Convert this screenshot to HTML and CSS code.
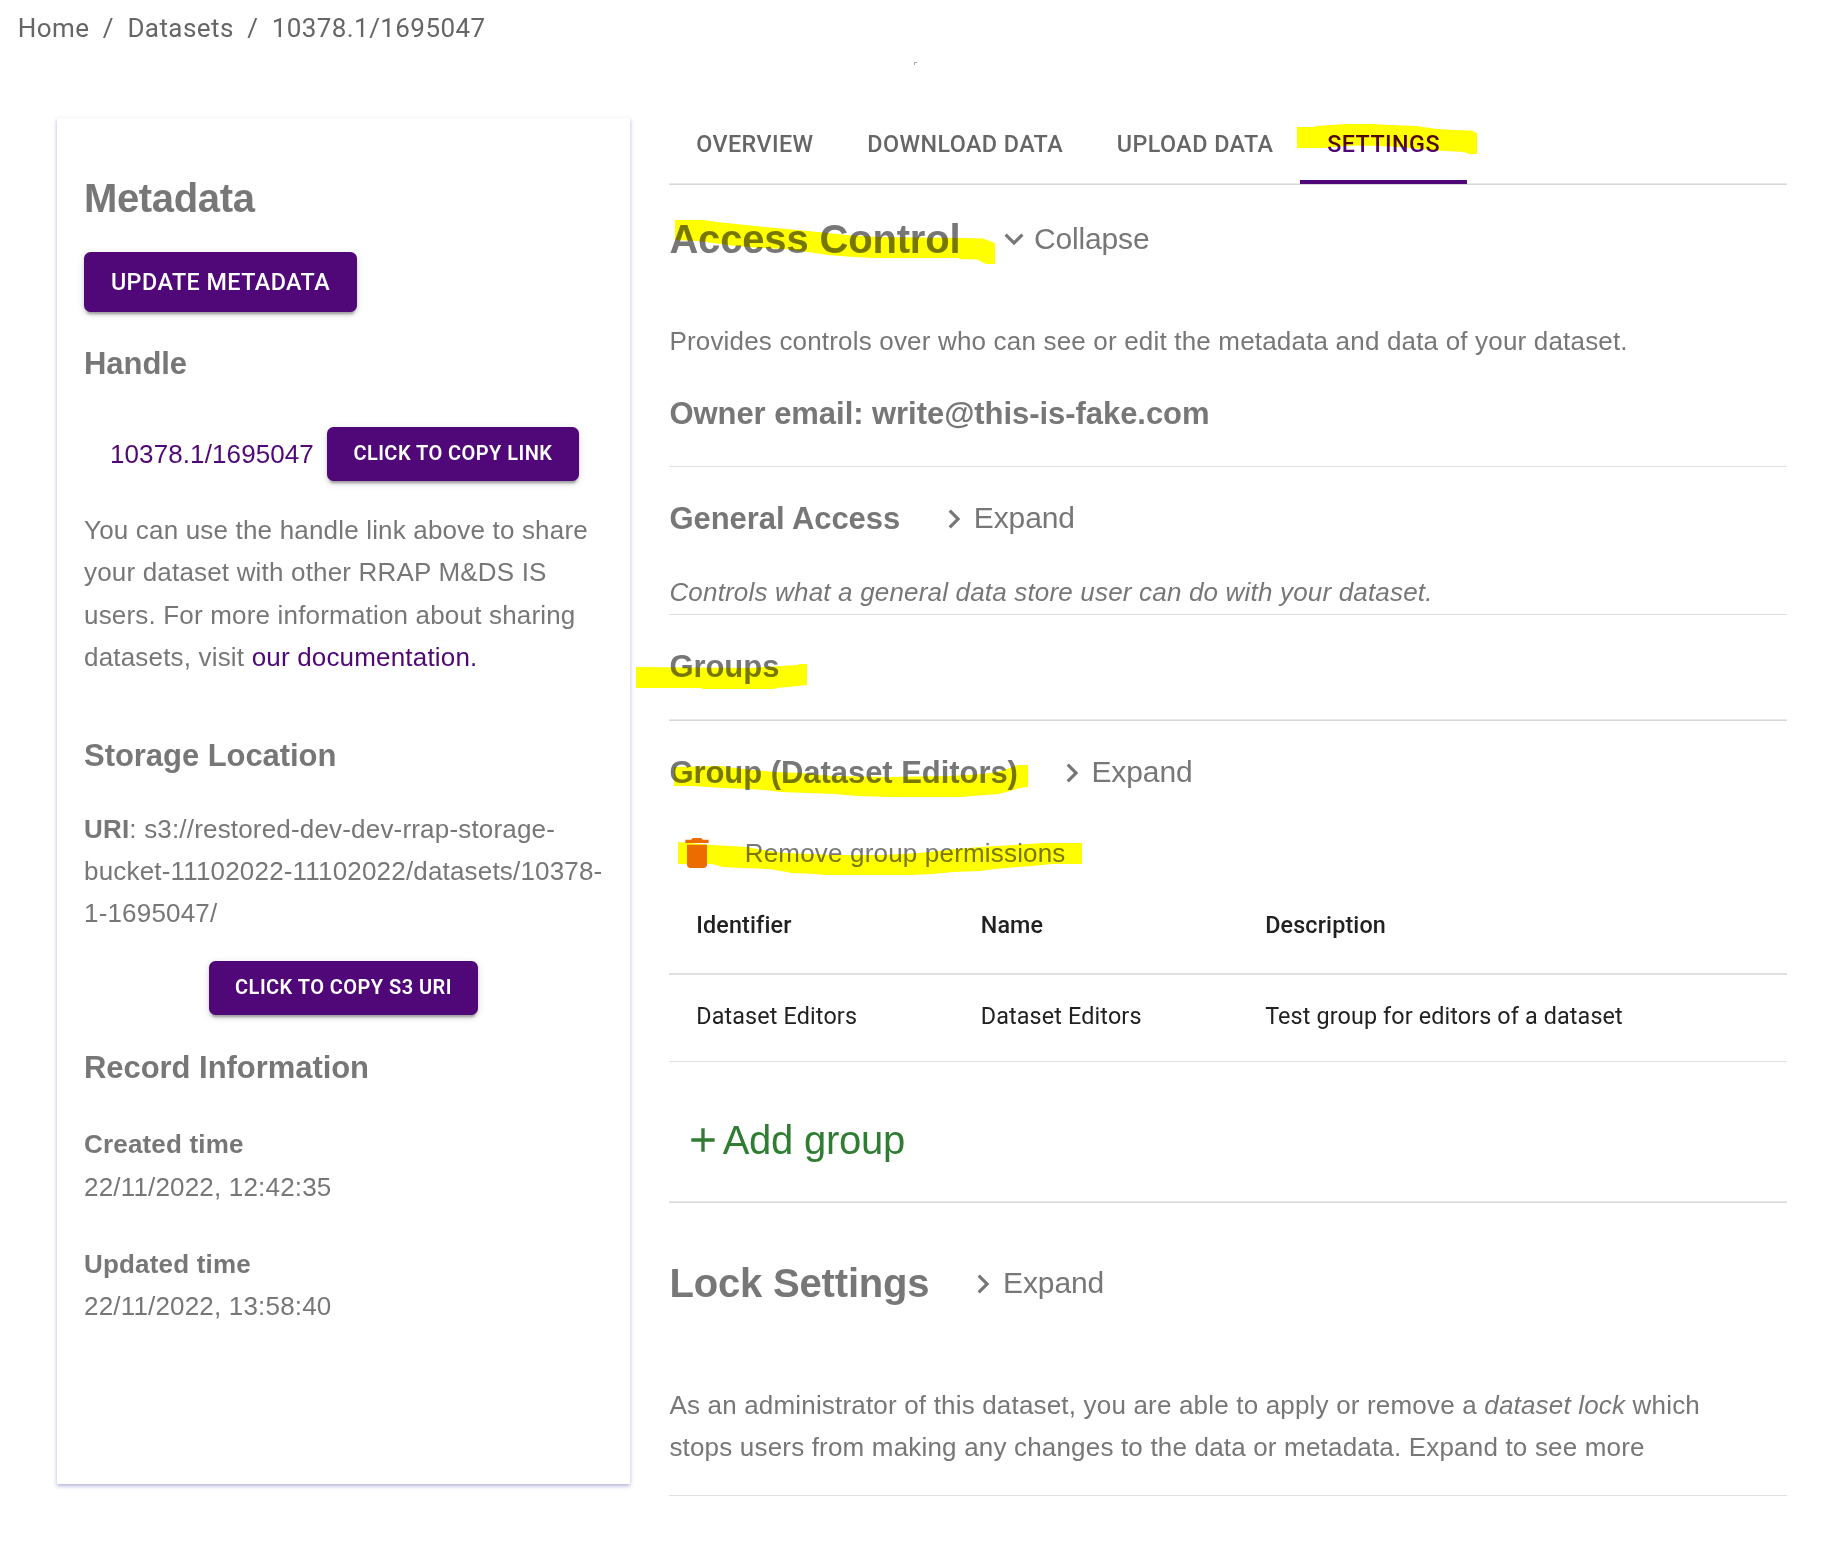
FILE: index.html
```html
<!DOCTYPE html>
<html lang="en">
<head>
<meta charset="utf-8">
<title>Dataset 10378.1/1695047</title>
<link rel="stylesheet" href="styles.css">
</head>
<body>
<nav class="crumbs"><a>Home</a><span>/</span><a>Datasets</a><span>/</span><a>10378.1/1695047</a></nav>
<div class="layout">
  <aside class="card">
    <h2 class="title card-title">Metadata</h2>
    <button class="btn btn-update">Update Metadata</button>
    <h3 class="subtitle handle-title">Handle</h3>
    <div class="handle-row">
      <a class="link handle-link">10378.1/1695047</a>
      <button class="btn btn-small btn-link">Click to copy link</button>
    </div>
    <p class="body">You can use the handle link above to share your dataset with other RRAP M&amp;DS IS users. For more information about sharing datasets, visit <a class="link">our documentation.</a></p>
    <h3 class="subtitle storage-title">Storage Location</h3>
    <p class="body uri"><b>URI</b>: s3://restored-dev-dev-rrap-storage-bucket-11102022-11102022/datasets/10378-1-1695047/</p>
    <button class="btn btn-small btn-uri">Click to copy S3 URI</button>
    <h3 class="subtitle record-title">Record Information</h3>
    <p class="body created"><b>Created time</b><br>22/11/2022, 12:42:35</p>
    <p class="body updated"><b>Updated time</b><br>22/11/2022, 13:58:40</p>
  </aside>

  <main class="content">
    <div class="tabs">
      <a class="tab">Overview</a>
      <a class="tab">Download data</a>
      <a class="tab">Upload data</a>
      <a class="tab active">Settings</a>
    </div>

    <div class="head access-head">
      <h2 class="title">Access Control</h2>
      <a class="toggle collapse"><svg class="chevron" viewBox="0 0 24 24"><path d="M16.59 8.59 12 13.17 7.41 8.59 6 10l6 6 6-6z"/></svg>Collapse</a>
    </div>
    <p class="body access-text">Provides controls over who can see or edit the metadata and data of your dataset.</p>
    <h3 class="subtitle owner">Owner email: write@this-is-fake.com</h3>
    <hr class="rule owner-rule">

    <div class="head sub-head">
      <h3 class="subtitle">General Access</h3>
      <a class="toggle"><svg class="chevron right" viewBox="0 0 24 24"><path d="M10 6 8.59 7.41 13.17 12l-4.58 4.59L10 18l6-6z"/></svg>Expand</a>
    </div>
    <p class="body italic general-text">Controls what a general data store user can do with your dataset.</p>
    <hr class="rule general-rule">

    <h3 class="subtitle groups">Groups</h3>
    <hr class="rule double groups-rule">

    <div class="head sub-head">
      <h3 class="subtitle">Group (Dataset Editors)</h3>
      <a class="toggle"><svg class="chevron right" viewBox="0 0 24 24"><path d="M10 6 8.59 7.41 13.17 12l-4.58 4.59L10 18l6-6z"/></svg>Expand</a>
    </div>
    <div class="body remove"><svg class="icon" viewBox="0 0 24 24"><path d="M6 19c0 1.1.9 2 2 2h8c1.1 0 2-.9 2-2V7H6v12zM19 4h-3.500l-1-1h-5l-1 1H5v2h14V4z"/></svg><span>Remove group permissions</span></div>

    <div class="table">
      <div class="row header"><span>Identifier</span><span>Name</span><span>Description</span></div>
      <div class="row"><span>Dataset Editors</span><span>Dataset Editors</span><span class="desc">Test group for editors of a dataset</span></div>
    </div>

    <a class="add"><svg class="icon" viewBox="0 0 24 24"><path d="M19 13h-6v6h-2v-6H5v-2h6V5h2v6h6v2z"/></svg>Add group</a>
    <hr class="rule double add-rule">

    <div class="head lock-head">
      <h2 class="title">Lock Settings</h2>
      <a class="toggle"><svg class="chevron right" viewBox="0 0 24 24"><path d="M10 6 8.59 7.41 13.17 12l-4.58 4.59L10 18l6-6z"/></svg>Expand</a>
    </div>
    <p class="body lock-text">As an administrator of this dataset, you are able to apply or remove a <i>dataset lock</i> which stops users from making any changes to the data or metadata. Expand to see more</p>
    <hr class="rule lock-rule">
  </main>
</div>

<!-- highlighter strokes drawn over the page -->
<svg class="marker" viewBox="0 0 1826 1547">
  <path d="M1297 127H1315V126L1331 125 1345 124H1373L1389 125 1416 126 1430 128 1438 129 1454 130 1471 130.500 1477 133V154H1469L1464 152 1446 151 1430 150 1416 148.500 1400 147 1380 146 1356 145.500 1340 146.500 1323 148H1297z"/>
  <path d="M675 220H703L717 222 755 226 787 229 818 232 847 235 877 237 961 238 983 238.500 995 243V264H986L977 259.500 959 259V258H874L854 257 828 255 808 252 785 249 762 248 736 246 713 243 697 241 675 240z"/>
  <path d="M636 667 750 668 781 666 798 665 799 664H807V685L788 687 776 688 775 689H702V688H636z"/>
  <path d="M674 767 721 766 735 768 752 770 775 772 802 773 819 775 834 776 888 777 949 776 984 774 997 772 1007 769 1018 765H1028V787L1020 788 1010 791 999 794 984 795 961 797H890L857 796 834 794 781 792 765 790 750 789 723 788 693 786 674 786z"/>
  <path d="M678 842 712 845 731 846 746 847 769 851 785 853 811 854 834 855 884 855 919 853 938 851 957 849 980 847 1014 845 1045 843H1082V864L1052 864 1033 866 1018 867 995 869 980 871 953 872 932 874 911 875H825L815 874 792 873 781 871 769 869 742 868 723 867 712 864H678z"/>
</svg>
<span class="speck"></span>
</body>
</html>
```
FILE: styles.css
```css
* { box-sizing: border-box; }

body {
  margin: 0;
  position: relative;
  background: #fff;
  color: #777;
  font-family: "Liberation Sans", Arial, sans-serif;
}

h2, h3, p { margin: 0; }

.crumbs {
  display: flex;
  gap: 13.400px;
  height: 50px;
  padding: 6px 17.800px 0;
  color: #666;
  font: 400 26px/44px Roboto, sans-serif;
  letter-spacing: 0.420px;
}

.layout {
  display: flex;
  align-items: flex-start;
  gap: 39.400px;
  padding: 54px 38px 0 57px;
}

.card {
  width: 573px;
  height: 1366px;
  margin-top: 14px;
  padding: 56px 22px 0 27px;
  box-shadow: 0 1.500px 4px rgba(60, 65, 165, 0.4);
}

.title { font-size: 40px; line-height: 48px; letter-spacing: -0.170px; }
.card-title { letter-spacing: -0.350px; }
.subtitle { font-size: 31px; line-height: 38px; margin-bottom: -2px; letter-spacing: -0.050px; }
.body { font-size: 26px; line-height: 42.330px; letter-spacing: 0.180px; }
.italic { font-style: italic; }
.link { color: #500778; }

.btn {
  display: block;
  padding: 0;
  border: 0;
  border-radius: 6.500px;
  background: #500778;
  color: #fff;
  font-family: Roboto, sans-serif;
  font-weight: 500;
  letter-spacing: 0.450px;
  text-transform: uppercase;
  box-shadow: 0 5px 2px -3px rgba(0, 0, 0, 0.2), 0 3px 3px rgba(0, 0, 0, 0.14), 0 2px 8px rgba(0, 0, 0, 0.12);
}
.btn-update { width: 273px; height: 60px; margin-top: 30px; font-size: 23.330px; }
.btn-small { height: 54px; padding-bottom: 2px; font-size: 20px; font-weight: 600; }
.btn-link { width: 252px; }
.btn-uri { width: 269px; margin: 26.200px 0 0 125px; }

.handle-title { margin-top: 33px; }
.handle-row {
  display: flex;
  align-items: center;
  gap: 13px;
  margin: 46px 0 28px;
  padding-left: 26px;
}
.handle-link { font-size: 26px; letter-spacing: 0.100px; }
.storage-title { margin-top: 59px; }
.uri { margin-top: 34.500px; }
.record-title { margin-top: 34px; }
.created { margin-top: 38.300px; }
.updated { margin-top: 35px; }

.content { width: 1118px; }

.tabs {
  display: flex;
  height: 81px;
  background: linear-gradient(#e9e9e9 50%, #dadada 50%) bottom / 100% 2px no-repeat;
  color: #666;
  font: 500 23.330px/40px Roboto, sans-serif;
  letter-spacing: 0.430px;
  text-transform: uppercase;
}
.tab { height: 80px; padding: 20px 26.850px 0; }
.tab.active { color: #500778; border-bottom: 4px solid #500778; }

.head { display: flex; align-items: center; gap: 35px; }
.toggle { display: flex; align-items: center; font-size: 30px; line-height: 36px; letter-spacing: -0.080px; }
.collapse { letter-spacing: -0.150px; }
.chevron { width: 38px; height: 38px; margin: -1px 0.500px -1px 0; fill: currentColor; }
.chevron.right { margin: 0 0.500px -2px 0; }
.icon { width: 40px; height: 40px; fill: currentColor; }

.rule { height: 1px; margin: 0; border: 0; background: #e0e0e0; }
.rule.double { height: 2px; background: linear-gradient(#e9e9e9 50%, #dadada 50%); }

.access-head { margin-top: 30px; }
.access-text { margin-top: 57px; }
.owner { margin-top: 33px; }
.owner-rule { margin-top: 34.670px; }
.sub-head { height: 36px; margin-top: 33.300px; }
.general-text { margin-top: 34.500px; }
.general-rule { margin-top: 0.870px; }
.groups { margin-top: 33.300px; }
.groups-rule { margin-top: 34.700px; }

.remove {
  display: flex;
  align-items: center;
  gap: 27.700px;
  height: 42.330px;
  margin-top: 41.400px;
  padding-left: 7.700px;
}
.remove .icon { color: #ed6c02; }

.table {
  margin-top: 9.670px;
  color: #212121;
  font: 400 23.330px/35px Roboto, sans-serif;
  letter-spacing: 0.150px;
}
.row {
  display: grid;
  grid-template-columns: 284.500px 284.500px 1fr;
  height: 87px;
  padding-top: 24.300px;
  border-bottom: 1px solid #e0e0e0;
}
.row span { padding-left: 26.800px; }
.row .desc { letter-spacing: 0.130px; }
.row.header {
  height: 91px;
  border-bottom: 2px solid #e0e0e0;
  font-weight: 500;
}

.add {
  display: flex;
  align-items: center;
  margin-top: 54px;
  padding-left: 13.300px;
  color: #2e7d32;
  font-size: 40px;
  line-height: 48px;
  letter-spacing: -0.250px;
}
.add-rule { margin-top: 37.600px; }

.lock-head { margin-top: 55.700px; }
.lock-text { width: 1090px; margin-top: 77px; }
.lock-rule { margin-top: 26.300px; }

.marker {
  position: absolute;
  top: 0;
  left: 0;
  width: 1826px;
  height: 1547px;
  fill: #ff0;
  mix-blend-mode: multiply;
  pointer-events: none;
}
.speck {
  position: absolute;
  top: 62px;
  left: 914px;
  width: 3px;
  height: 3px;
  border: solid #aaa;
  border-width: 1px 0 0 1px;
}
```
